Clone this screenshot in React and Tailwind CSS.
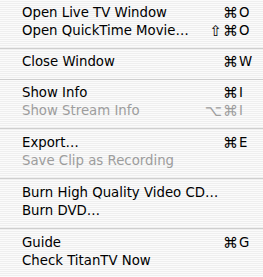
const sections = [
  [
    { label: "Open Live TV Window", mods: ["⌘"], letter: "O" },
    { label: "Open QuickTime Movie…", mods: ["⇧", "⌘"], letter: "O" },
  ],
  [{ label: "Close Window", mods: ["⌘"], letter: "W" }],
  [
    { label: "Show Info", mods: ["⌘"], letter: "I" },
    { label: "Show Stream Info", mods: ["⌥", "⌘"], letter: "I", disabled: true },
  ],
  [
    { label: "Export…", mods: ["⌘"], letter: "E" },
    { label: "Save Clip as Recording", disabled: true },
  ],
  [
    { label: "Burn High Quality Video CD…" },
    { label: "Burn DVD…" },
  ],
  [
    { label: "Guide", mods: ["⌘"], letter: "G" },
    { label: "Check TitanTV Now" },
  ],
];

function MenuItem({ label, mods = [], letter, disabled }) {
  return (
    <div
      className={
        "flex h-[18px] items-center pl-[22px] leading-[18px] " +
        (disabled ? "text-[#9d9d9d]" : "text-black")
      }
    >
      <span className="flex-1 whitespace-nowrap">{label}</span>
      <span className="flex w-[44px] justify-end gap-[1px] pr-[1px] text-[15px] whitespace-nowrap">
        {mods.map((m) => (
          <span key={m}>{m}</span>
        ))}
      </span>
      <span className="w-[24px] whitespace-nowrap">{letter}</span>
    </div>
  );
}

function Separator({ tall }) {
  return (
    <div className={tall ? "h-[14px] pt-[8px]" : "h-[13px] pt-[8px]"}>
      <div className="h-px bg-[#cfcfcf]" />
    </div>
  );
}

export default function App() {
  return (
    <div className="w-[263px] h-[277px] overflow-hidden pt-[4px] bg-[repeating-linear-gradient(to_bottom,#fbfbfb_0px,#fbfbfb_1px,#efefef_1px,#efefef_2px)] font-['DejaVu_Sans',sans-serif] text-[13.3px]">
      {sections.map((items, i) => (
        <div key={i}>
          {i > 0 && <Separator tall={i > 2} />}
          {items.map((item) => (
            <MenuItem key={item.label} {...item} />
          ))}
        </div>
      ))}
    </div>
  );
}
